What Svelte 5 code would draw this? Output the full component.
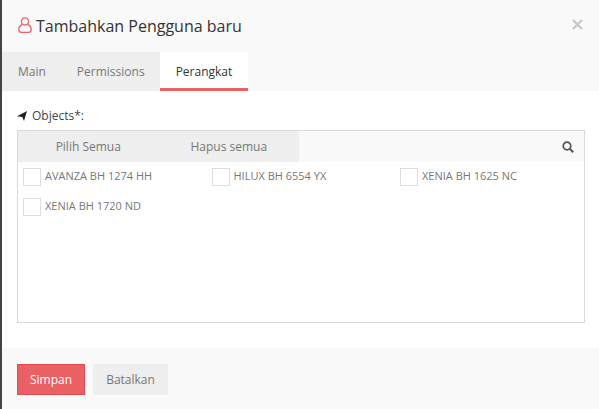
<script lang="ts">
  let tabs = ["Main", "Permissions", "Perangkat"];
  let objects = [
    "AVANZA BH 1274 HH",
    "HILUX BH 6554 YX",
    "XENIA BH 1625 NC",
    "XENIA BH 1720 ND",
  ];
</script>

<main>
  <div class="edge"></div>
  <div class="modal">
    <header>
      <svg class="user" width="14" height="16" viewBox="0 0 14 16" fill="none" stroke="#e8636a" stroke-width="1.3">
        <circle cx="7" cy="4.4" r="3.6" />
        <path d="M4.4 7.4C2.2 8.4.8 10.4.8 12.6c0 1.6.9 2.7 2.3 2.7h7.8c1.4 0 2.3-1.1 2.3-2.7 0-2.2-1.4-4.2-3.6-5.2" />
      </svg>
      <h1>Tambahkan Pengguna baru</h1>
      <svg class="close" width="11" height="11" viewBox="0 0 11 11" stroke="#c8c8c8" stroke-width="2.4">
        <path d="M1 1l9 9M10 1l-9 9" />
      </svg>
    </header>

    <nav>
      {#each tabs as tab, i}
        <div class="tab" class:active={i === 2}>{tab}</div>
      {/each}
    </nav>

    <section>
      <div class="label">
        <svg width="10" height="10" viewBox="0 0 10 10"><path d="M10 0L0 5.3l5.2.6L7 10z" fill="#222" /></svg>
        <span>Objects*:</span>
      </div>
      <div class="box">
        <div class="toolbar">
          <div class="btn">Pilih Semua</div>
          <div class="btn">Hapus semua</div>
          <svg class="search" width="12" height="12" viewBox="0 0 12 12" fill="none" stroke="#555" stroke-width="1.7">
            <circle cx="5" cy="5" r="3.8" />
            <path d="M7.8 7.8l3.4 3.4" stroke-width="2" />
          </svg>
        </div>
        <div class="list">
          {#each objects as name}
            <div class="item">
              <span class="check"></span>
              <span class="name">{name}</span>
            </div>
          {/each}
        </div>
      </div>
    </section>

    <footer>
      <button class="save">Simpan</button>
      <button class="cancel">Batalkan</button>
    </footer>
  </div>
</main>

<style>
  :global(body) {
    margin: 0;
    font-family: "Open Sans", sans-serif;
  }

  main {
    display: flex;
    width: 599px;
    height: 409px;
    overflow: hidden;
    background: #fff;
  }

  .edge {
    width: 2px;
    background: #444;
  }

  .modal {
    flex: 1;
    display: flex;
    flex-direction: column;
    min-width: 0;
  }

  header {
    height: 52px;
    box-sizing: border-box;
    display: flex;
    align-items: center;
    padding: 0 16px;
    background: #f9f9f9;
  }

  .user {
    margin-right: 4px;
    margin-top: -3px;
  }

  h1 {
    flex: 1;
    margin: 0;
    font-size: 16px;
    font-weight: 400;
    color: #333;
  }

  .close {
    margin-top: -3px;
  }

  nav {
    height: 39px;
    display: flex;
    background: #f9f9f9;
  }

  .tab {
    display: flex;
    align-items: center;
    box-sizing: border-box;
    padding: 0 15px 0 16px;
    height: 39px;
    font-size: 12px;
    color: #777;
    background: #eee;
  }

  .tab.active {
    padding: 3px 16px 0;
    color: #333;
    background: #fff;
    border-bottom: 3px solid #e96065;
  }

  section {
    flex: 1;
    padding: 16px 14px 25px 15px;
    background: #fff;
  }

  .label {
    display: flex;
    align-items: center;
    gap: 5px;
    height: 17px;
    margin-bottom: 6px;
    font-size: 12px;
    color: #444;
  }

  .box {
    height: 193px;
    box-sizing: border-box;
    border: 1px solid #d9d9d9;
  }

  .toolbar {
    display: flex;
    align-items: center;
    height: 31px;
    padding-right: 10px;
    background: #f9f9f9;
  }

  .btn {
    width: 140.5px;
    height: 31px;
    line-height: 31px;
    text-align: center;
    font-size: 12px;
    color: #777;
    background: #eee;
  }

  .search {
    margin-left: auto;
  }

  .list {
    display: grid;
    grid-template-columns: repeat(3, 188.5px);
    padding-left: 5px;
  }

  .item {
    display: flex;
    align-items: center;
    gap: 4px;
    height: 30px;
    font-size: 11px;
    color: #777;
  }

  .name {
    margin-top: -3px;
  }

  .check {
    width: 18px;
    height: 18px;
    box-sizing: border-box;
    border: 1px solid #ddd;
    background: #fff;
  }

  footer {
    height: 61px;
    box-sizing: border-box;
    display: flex;
    gap: 8px;
    padding: 16px 15px;
    background: #f9f9f9;
  }

  button {
    height: 31px;
    padding: 0;
    border: 1px solid transparent;
    font: 12px "Open Sans", sans-serif;
  }

  .save {
    width: 68px;
    color: #fff;
    background: #e96065;
    border-color: #e8474e;
  }

  .cancel {
    width: 75px;
    color: #777;
    background: #eee;
    border-color: #eee;
  }
</style>
